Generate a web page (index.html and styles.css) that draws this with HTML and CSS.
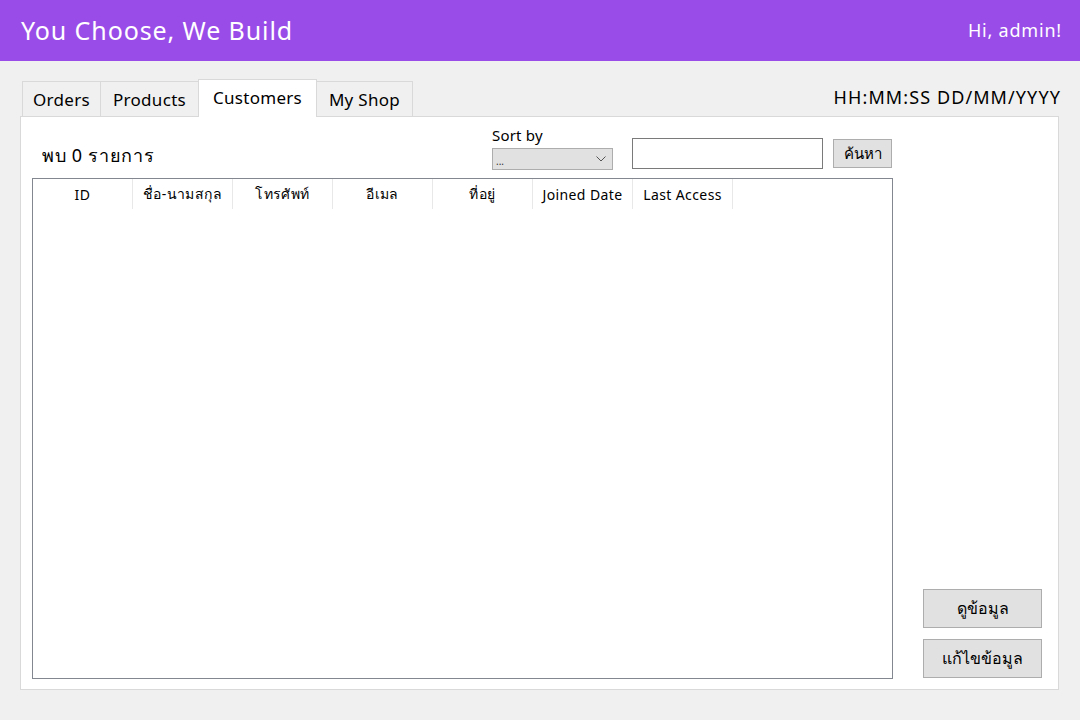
FILE: index.html
```html
<!DOCTYPE html>
<html>
<head>
<meta charset="utf-8">
<link rel="stylesheet" href="styles.css">
</head>
<body>
<header class="topbar">
  <div class="brand">You Choose, We Build</div>
  <div class="greet">Hi, admin!</div>
</header>
<main class="main">
  <div class="tabrow">
    <div class="tabs">
      <div class="tab t-orders">Orders</div>
      <div class="tab t-products">Products</div>
      <div class="tab t-customers active">Customers</div>
      <div class="tab t-shop">My Shop</div>
    </div>
    <div class="clock">HH:MM:SS DD/MM/YYYY</div>
  </div>
  <section class="panel">
    <div class="content">
      <div class="toolbar">
        <div class="found">พบ 0 รายการ</div>
        <div class="sort">
          <div class="sort-label">Sort by</div>
          <div class="select"><span class="sel-text">...</span>
            <svg class="chev" width="10" height="6" viewBox="0 0 10 6"><path d="M0.5 0.5 L5 5 L9.5 0.5" fill="none" stroke="#555" stroke-width="1"/></svg>
          </div>
        </div>
        <div class="search"></div>
        <div class="btn btn-search">ค้นหา</div>
      </div>
      <div class="grid">
        <div class="ghead">
          <div class="gcol">ID</div>
          <div class="gcol">ชื่อ-นามสกุล</div>
          <div class="gcol">โทรศัพท์</div>
          <div class="gcol">อีเมล</div>
          <div class="gcol">ที่อยู่</div>
          <div class="gcol">Joined Date</div>
          <div class="gcol">Last Access</div>
        </div>
      </div>
    </div>
    <div class="side">
      <div class="btn btn-side">ดูข้อมูล</div>
      <div class="btn btn-side">แก้ไขข้อมูล</div>
    </div>
  </section>
</main>
</body>
</html>
```

FILE: styles.css
```css
* { box-sizing: border-box; }
html, body { margin: 0; padding: 0; }
body {
  width: 1080px;
  height: 720px;
  background: #f0f0f0;
  font-family: "Noto Sans", "Open Sans", sans-serif;
  color: #000;
  overflow: hidden;
}
.topbar {
  height: 61px;
  background: #994ce8;
  color: #fff;
  display: flex;
  align-items: center;
  justify-content: space-between;
  padding: 0 18px 0 21px;
}
.brand { font-size: 25px; letter-spacing: 0.9px; margin-top: -1px; }
.greet { font-size: 18px; letter-spacing: 0.8px; margin-top: -2px; }
.main { padding: 18px 21px 0 20px; }
.tabrow {
  display: flex;
  justify-content: space-between;
  align-items: flex-end;
  height: 37px;
  padding-left: 2px;
}
.tabs { display: flex; align-items: flex-end; }
.tab {
  height: 35px;
  border: 1px solid #d9d9d9;
  border-bottom: none;
  background: #f0f0f0;
  font-size: 17px;
  letter-spacing: 0.3px;
  display: flex;
  align-items: center;
  justify-content: center;
  margin-right: -1px;
  padding-top: 0;
}
.t-orders { width: 79px; }
.t-products { width: 99px; }
.t-customers { width: 119px; }
.t-shop { width: 97px; }
.tab.active {
  background: #fff;
  position: relative;
  z-index: 1;
  margin-bottom: -1px;
  padding-bottom: 2px;
  height: 38px;
}
.clock { font-size: 18px; letter-spacing: 1.1px; padding-bottom: 7px; margin-right: -2px; }
.panel {
  height: 574px;
  width: 1039px;
  background: #fff;
  border: 1px solid #d9d9d9;
  display: flex;
  padding: 10px 16px 10px 11px;
}
.content { width: 861px; display: flex; flex-direction: column; }
.toolbar { height: 51px; display: flex; align-items: flex-start; position: relative; }
.found { font-size: 18px; letter-spacing: 0.7px; margin-left: 10px; margin-top: 14px; width: 450px; }
.sort { margin-left: 0; width: 140px; }
.sort-label { font-size: 15px; letter-spacing: 0.2px; margin-top: -2px; height: 23px; }
.select {
  width: 121px;
  height: 22px;
  background: #e1e1e1;
  border: 1px solid #adadad;
  display: flex;
  align-items: center;
  justify-content: space-between;
  padding: 0 6px 0 3px;
  font-size: 10px;
}
.sel-text { margin-top: 4px; color: #333; }
.search {
  width: 191px;
  height: 31px;
  border: 1px solid #7a7a7a;
  margin-top: 11px;
  background: #fff;
}
.btn {
  background: #e1e1e1;
  border: 1px solid #adadad;
  display: flex;
  align-items: center;
  justify-content: center;
}
.btn-search {
  width: 59px;
  height: 29px;
  margin-left: 10px;
  margin-top: 12px;
  font-size: 15px;
}
.grid {
  width: 861px;
  height: 501px;
  border: 1px solid #828790;
  background: #fff;
}
.ghead { display: flex; height: 30px; }
.gcol {
  width: 100px;
  border-right: 1px solid #e8e8e8;
  font-size: 14px;
  letter-spacing: 0.4px;
  display: flex;
  align-items: center;
  justify-content: center;
}
.side {
  flex: 1;
  display: flex;
  flex-direction: column;
  justify-content: flex-end;
  align-items: flex-end;
  gap: 11px;
  padding-bottom: 1px;
}
.btn-side {
  width: 119px;
  height: 39px;
  font-size: 16px;
}
```
